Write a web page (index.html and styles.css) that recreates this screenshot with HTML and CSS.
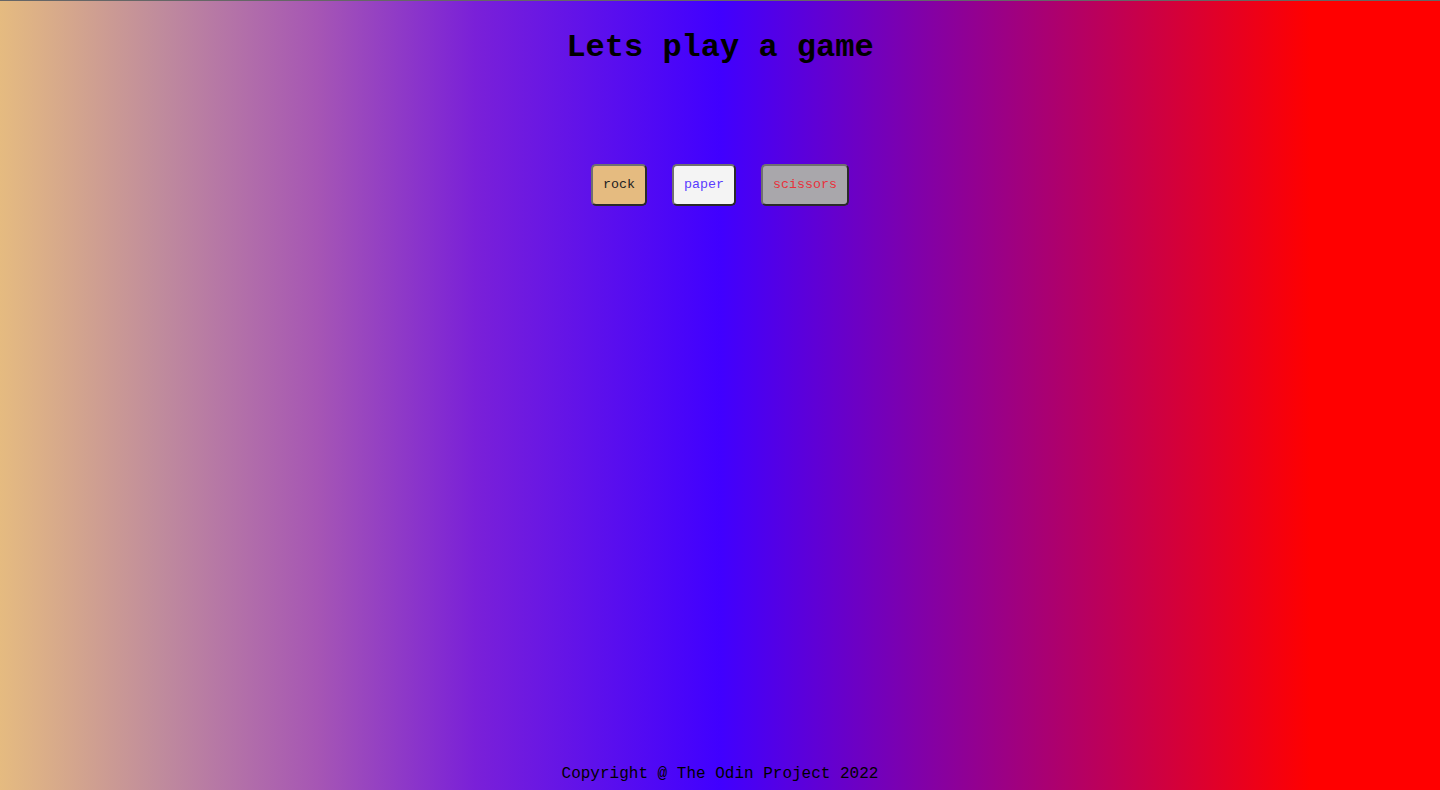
FILE: index.html
```html
<!DOCTYPE html>
<html lang="en">
<head>
<meta charset="utf-8">
<title>Rock Paper Scissors</title>
<link rel="stylesheet" href="styles.css">
</head>
<body>
<header class="top">
  <h1 class="title">Lets play a game</h1>
</header>
<main class="game">
  <div class="choices">
    <button class="btn rock">rock</button>
    <button class="btn paper">paper</button>
    <button class="btn scissors">scissors</button>
  </div>
</main>
<footer class="footer">Copyright @ The Odin Project 2022</footer>
</body>
</html>
```

FILE: styles.css
```css
html, body {
  margin: 0;
  padding: 0;
  height: 100%;
}
body {
  display: flex;
  flex-direction: column;
  font-family: "Liberation Mono", "Courier New", monospace;
  color: #000;
  background: linear-gradient(to right, #e5bb80 0%, #c08c9c 11%, #a656b4 22%, #7a20d8 33%, #4000ff 50%, #ff0000 91%, #ff0000 100%);
  border-top: 1px solid #666;
  box-sizing: border-box;
}
.top {
  display: flex;
  justify-content: center;
  padding-top: 29px;
}
.title {
  margin: 0;
  font-size: 32px;
  font-weight: bold;
  line-height: 36px;
}
.game {
  flex: 1;
}
.choices {
  display: flex;
  justify-content: center;
  gap: 25px;
  margin-top: 98px;
}
.btn {
  font-family: "Liberation Mono", "Courier New", monospace;
  font-size: 13.33px;
  line-height: 16px;
  padding: 11px 10px;
  border-width: 2px;
  border-style: solid;
  border-color: #707070 #2a2a2a #2a2a2a #707070;
  border-radius: 5px;
  cursor: pointer;
}
.rock {
  background: #e5bb80;
  color: #222;
}
.paper {
  background: #f4f4f4;
  color: #5a3cff;
}
.scissors {
  background: #a9a7ab;
  color: #e8323c;
}
.footer {
  text-align: center;
  font-size: 16px;
  line-height: 18px;
  padding-bottom: 7px;
}
```
